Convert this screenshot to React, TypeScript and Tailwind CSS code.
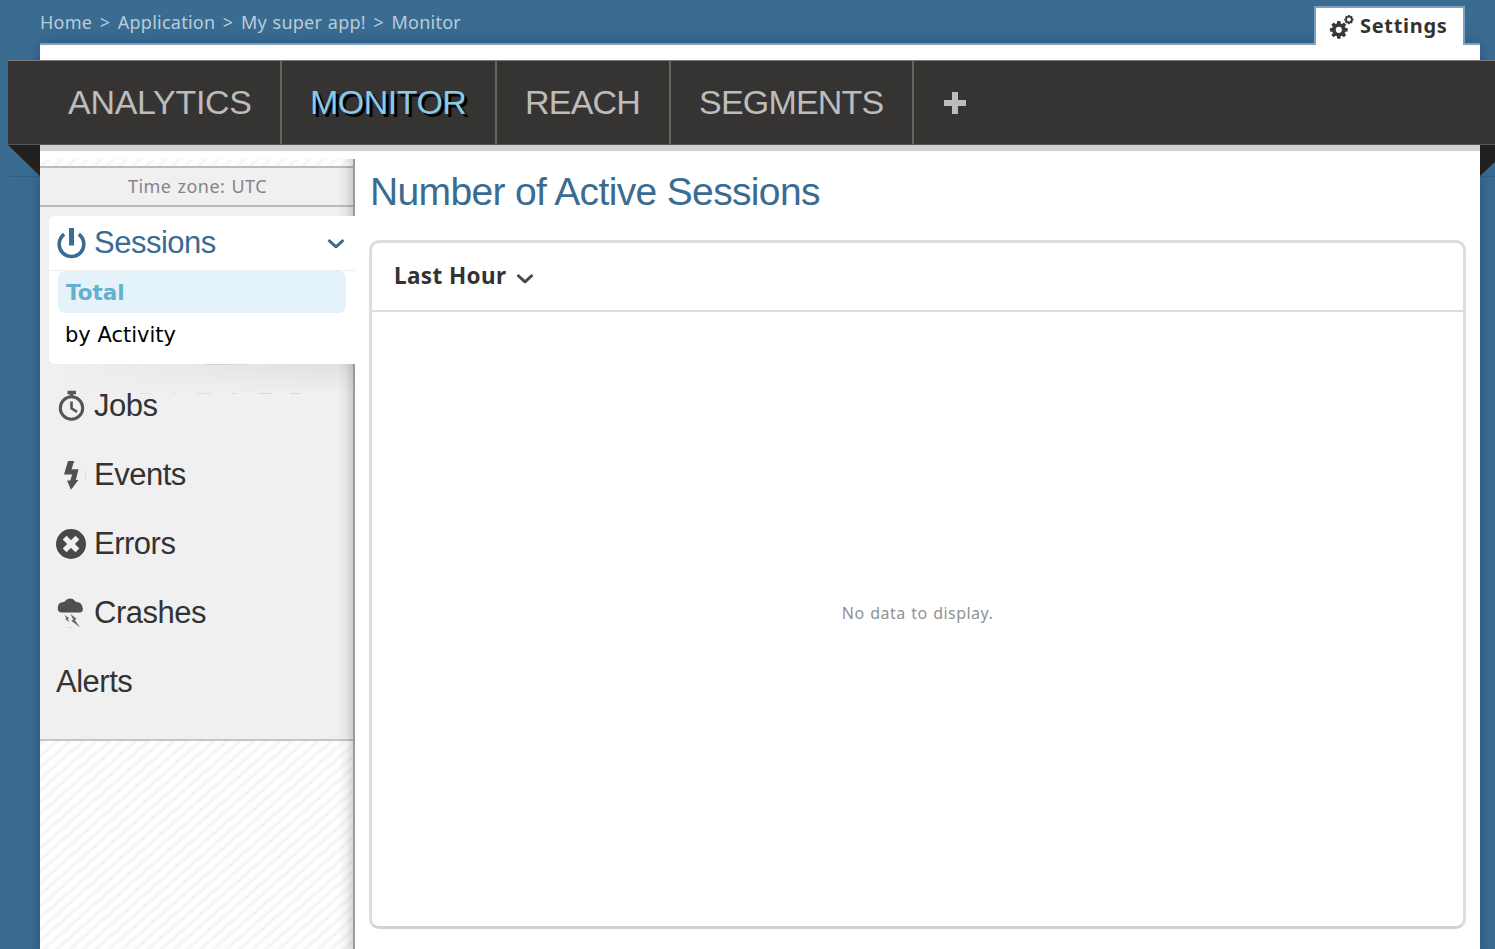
import React from "react";

const navItems = [
  { label: "ANALYTICS", cls: "w-[274px] pl-[60px] tracking-[-0.3px] text-[#bcbcbc]" },
  { label: "MONITOR", cls: "w-[215px] pl-[28px] tracking-[-0.5px] text-[#86cbe9] [text-shadow:3px_3px_0_#000]" },
  { label: "REACH", cls: "w-[174px] pl-[28px] tracking-[-0.8px] text-[#bcbcbc]" },
  { label: "SEGMENTS", cls: "w-[243px] pl-[28px] tracking-[-0.8px] text-[#bcbcbc]" },
];

const gearPath = (cx: number, cy: number, r: number, teeth: number, depth: number, hole: number) => {
  const pts: string[] = [];
  for (let i = 0; i < teeth; i++) {
    const a = (i / teeth) * Math.PI * 2 - Math.PI / 2;
    const w = Math.PI / teeth;
    [
      [a - w * 0.75, r - depth],
      [a - w * 0.45, r],
      [a + w * 0.45, r],
      [a + w * 0.75, r - depth],
    ].forEach(([t, q]) => pts.push(`${(cx + Math.cos(t) * q).toFixed(2)},${(cy + Math.sin(t) * q).toFixed(2)}`));
  }
  return `M${pts.join("L")}Z M${cx - hole},${cy} a${hole},${hole} 0 1,0 ${2 * hole},0 a${hole},${hole} 0 1,0 ${-2 * hole},0Z`;
};

const Gears = () => (
  <svg width="26" height="26" viewBox="0 0 26 26" fill="#393836" fillRule="evenodd">
    <path d={gearPath(9.8, 15.8, 9, 8, 2.3, 3.1)} />
    <path d={gearPath(19.9, 5.6, 4.7, 8, 0.9, 2)} />
  </svg>
);

const Power = () => (
  <svg width="30" height="32" viewBox="0 0 30 32" fill="none" stroke="#3a6c92">
    <path d="M8.200 7.300A12.300 12.300 0 1 0 22.800 7.300" strokeWidth="3.6" />
    <path d="M15.500 1V18.500" strokeWidth="5" />
  </svg>
);

const Stopwatch = () => (
  <svg width="30" height="32" viewBox="0 0 30 32" fill="none" stroke="#555">
    <circle cx="15.5" cy="18" r="11.2" strokeWidth="3" />
    <path d="M11.5 2.5h8.5M15.5 3v4" strokeWidth="3.4" />
    <path d="M15.5 11.5v6.8l5.500 3.500" strokeWidth="2.6" />
  </svg>
);

const Bolt = () => (
  <svg width="30" height="32" viewBox="0 0 30 32" fill="#505050">
    <path d="M12 2h6.3l-2.8 8.3h7L19.8 21h2.6L15 30.800 11 21.500h3.200l2-6H8z" />
    <path d="M29.500 11v11" stroke="#ddd" />
  </svg>
);

const ErrorIcon = () => (
  <svg width="30" height="32" viewBox="0 0 30 32">
    <circle cx="15" cy="16" r="15" fill="#484848" />
    <path d="M10.5 11.5l9 9M19.5 11.5l-9 9" stroke="#f0f0f0" strokeWidth="5.4" strokeLinecap="square" />
  </svg>
);

const Storm = () => (
  <svg width="30" height="32" viewBox="0 0 30 32" fill="#4f4f4f">
    <path d="M6 15.500C3 15.500 1.600 13.700 1.800 11.300 2 8.600 2.600 6 5.400 5.500 7 5 8 5.400 9 4.300 10.500 2.300 12 1.500 14 1.500c2.200 0 3.800 .8 5 2.500 1 1.200 2.400 .9 4 1.400 2.400 .8 2.900 2.800 3.700 5.500.8 2.700-.7 4.600-3.200 4.600z" />
    <path d="M8.500 18l4.500 3-1.200 1.200 1.700 3.300-4.200-3.400 1-.9zM14.500 17l6.200 5-2 1 5.500 7.500-9-6.700 2.100-1z" opacity=".85" />
    <path d="M11 30.500h5" stroke="#ccc" strokeWidth=".7" />
  </svg>
);

const Chevron = ({ color }: { color: string }) => (
  <svg width="18" height="12" viewBox="0 0 18 12" fill="none" stroke={color} strokeWidth="3">
    <path d="M1.500 2L9 8.800 16.500 2" strokeLinejoin="round" />
  </svg>
);

const menu = [
  { label: "Jobs", icon: <Stopwatch /> },
  { label: "Events", icon: <Bolt /> },
  { label: "Errors", icon: <ErrorIcon /> },
  { label: "Crashes", icon: <Storm /> },
  { label: "Alerts", icon: null },
];

const Header = () => (
  <header className="flex h-[43px] justify-between pl-[40px] pr-[30px]">
    <div className="flex whitespace-pre pt-[10px] text-[18px] leading-[25px] tracking-[0.25px] text-[#b9ccda]">
      <span>Home</span>
      <span className="mx-[7.500px]">&gt;</span>
      <span>Application</span>
      <span className="mx-[7.500px]">&gt;</span>
      <span className="[word-spacing:0.7px]">My super app!</span>
      <span className="mx-[7.500px]">&gt;</span>
      <span>Monitor</span>
    </div>
    <div className="relative z-10 mt-[6px] flex h-[39px] w-[151px] items-start border-2 border-b-0 border-[#809fb9] bg-white pl-[13px] text-[20px] font-bold tracking-[0.7px] text-[#333]">
      <span className="mt-[6px]"><Gears /></span>
      <span className="ml-[5px] mt-[3px] leading-[30px]">Settings</span>
    </div>
  </header>
);

const Nav = () => (
  <nav className="relative -ml-[32px] -mr-[15px] mt-[15px] flex h-[85px] border-b border-t border-b-[#555] border-t-[#7c7c7c] bg-[#363432] font-['Liberation_Sans',sans-serif] text-[34px] leading-[83px]">
    {navItems.map((n) => (
      <div key={n.label} className={`shrink-0 whitespace-nowrap border-r-2 border-[#666461] ${n.cls}`}>
        {n.label}
      </div>
    ))}
    <div className="flex items-center pl-[30px]">
      <svg width="22" height="22" viewBox="0 0 22 22" stroke="#bcbcbc" strokeWidth="6">
        <path d="M11 0v22M0 11h22" />
      </svg>
    </div>
    <svg className="absolute left-0 top-[84px]" width="32" height="33" viewBox="0 0 32 33">
      <path d="M0 0H32V31z" fill="#23211f" />
      <path d="M0 31.500H32" stroke="#315c7d" />
    </svg>
    <svg className="absolute right-0 top-[84px]" width="15" height="33" viewBox="0 0 15 33">
      <path d="M0 0H15V17L0 31z" fill="#23211f" />
      <path d="M0 31.500H15" stroke="#315c7d" />
    </svg>
  </nav>
);

const Sidebar = () => (
  <aside className="relative flex w-[315px] shrink-0 flex-col bg-[repeating-linear-gradient(138.5deg,#fff_0,#fefefe_3.500px,#f4f4f4_6px,#f4f4f4_6.600px,#fff_8.650px)]">
    <div className="h-[7px]" />
    <div className="h-[41px] border-y-2 border-[#bbb] bg-[#f0f0f0] text-center text-[18px] leading-[36px] tracking-[0.45px] [word-spacing:1px] text-[#858585]">
      Time zone: UTC
    </div>
    <div className="flex h-[534px] flex-col border-b-2 border-[#c8c5bf] bg-[#f0f0f0] pt-[10px] font-['Liberation_Sans',sans-serif] text-[31px] tracking-[-0.5px] text-[#333]">
      <div className="relative z-10 -mt-px ml-[9px] h-[148px] shrink-0 rounded-l-[6px] bg-white">
        <div className="flex h-[55px] items-center border-b border-[#eee] pl-[7px] pr-[10px] text-[#3a6c92]">
          <span className="-mt-px"><Power /></span>
          <span className="ml-[8px] flex-1 leading-[52px]">Sessions</span>
          <span className="flex pt-px"><Chevron color="#3a6c92" /></span>
        </div>
        <div className="mx-[9px] h-[42px] rounded-[7px] bg-[#e4f3fa] pl-[8px] font-['DejaVu_Sans',sans-serif] text-[21.500px] font-bold leading-[43px] tracking-normal text-[#65afd0]">
          Total
        </div>
        <div className="pl-[16px] font-['DejaVu_Sans',sans-serif] text-[21px] leading-[44px] tracking-normal text-black">
          by Activity
        </div>
      </div>
      <div className="h-[30px] shrink-0 bg-[linear-gradient(to_bottom,#dededc,transparent)] [mask-image:linear-gradient(to_right,transparent_5%,#000)]">
        <svg width="315" height="30" viewBox="0 0 315 30" stroke="#cfcfcf">
          <path d="M165 .500h23" stroke="#bbb" />
          <path d="M188 .500h20M43 29.500h5M84 29.500h3M100 29.500h12M131 29.500h5M157 29.500h15M192 29.500h6M218 29.500h13M250 29.500h10" />
        </svg>
      </div>
      <div className="-mt-[23px] flex flex-col">
        {menu.map((m) => (
          <div key={m.label} className="flex h-[69px] items-center pl-[16px]">
            {m.icon && <span className="mr-[8px]">{m.icon}</span>}
            <span className="pt-[2px]">{m.label}</span>
          </div>
        ))}
      </div>
    </div>
    <div className="pointer-events-none absolute inset-y-0 right-0 w-[17px] border-r-2 border-[#999b9c] bg-[linear-gradient(to_right,transparent,rgba(0,0,0,0.04)_50%,rgba(0,0,0,0.15))]" />
  </aside>
);

const Content = () => (
  <main className="flex flex-1 flex-col pl-[14px] pr-[14px]">
    <h1 className="ml-px mt-[8px] h-[73px] font-['Liberation_Sans',sans-serif] text-[39px] leading-[50px] tracking-[-0.65px] text-[#3a6c92]">
      Number of Active Sessions
    </h1>
    <section className="flex h-[689px] flex-col rounded-[10px] border-[3px] border-[#dcdcdc] border-b-[#d2d2d2] bg-white">
      <div className="flex h-[69px] items-center border-b-2 border-[#dcdcdc] pl-[22px] text-[22.5px] font-bold tracking-[0.4px] text-[#333]">
        <span className="-mt-[2px] mr-[9px] leading-[65px]">Last Hour</span>
        <span className="pt-[4px]"><Chevron color="#484848" /></span>
      </div>
      <div className="flex flex-1 items-center justify-center pb-[12px] text-[16px] tracking-[0.45px] [word-spacing:1px] text-[#929292]">
        No data to display.
      </div>
    </section>
  </main>
);

export default function App() {
  return (
    <div className="h-[949px] w-[1495px] overflow-hidden bg-[#3a6c92] font-['Noto_Sans',sans-serif]">
      <Header />
      <div className="ml-[40px] mr-[15px] h-[920px] border-t-2 border-[#809fb9] bg-white shadow-[0_0_14px_rgba(35,70,115,0.65)]">
        <Nav />
        <div className="h-[6px] bg-[#d0d0d0]" />
        <div className="flex h-[798px] pt-[8px]">
          <Sidebar />
          <Content />
        </div>
      </div>
    </div>
  );
}
